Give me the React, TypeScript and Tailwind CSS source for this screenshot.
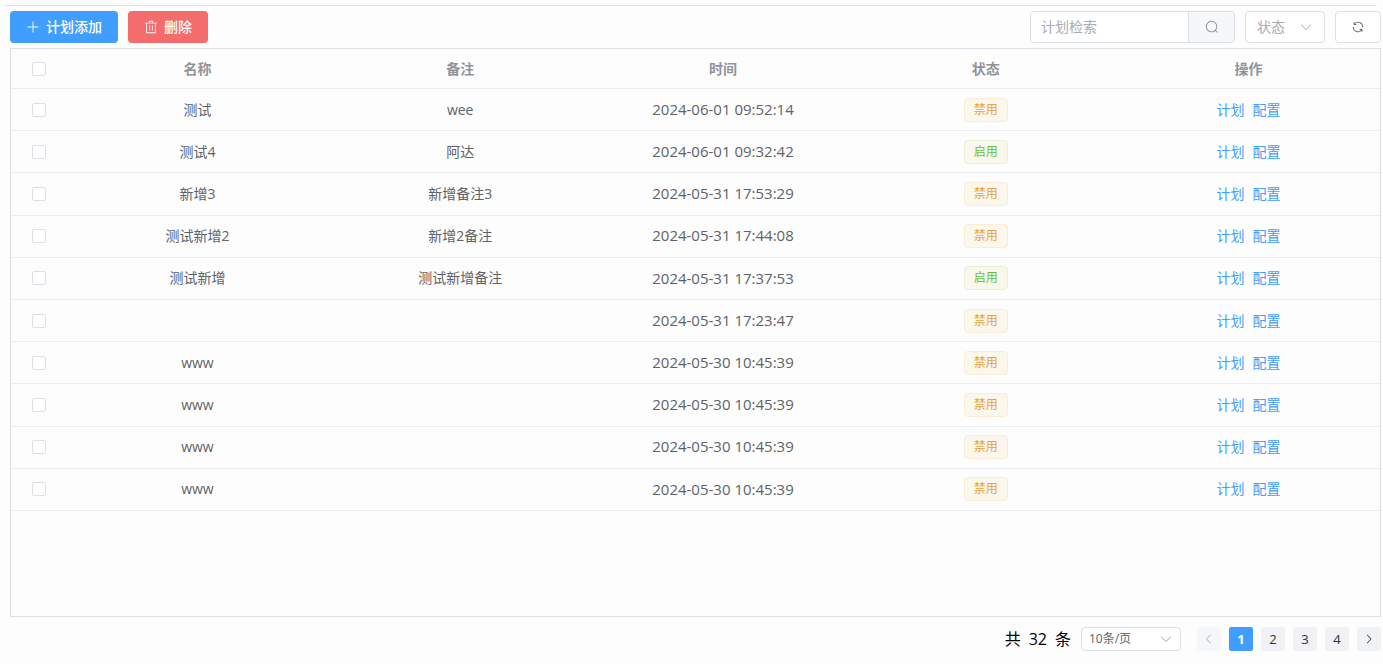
import React, { useState } from 'react';

interface Plan {
  id: number;
  name: string;
  remark: string;
  time: string;
  enabled: boolean;
}

const PLANS: Plan[] = [
  { id: 1, name: '测试', remark: 'wee', time: '2024-06-01 09:52:14', enabled: false },
  { id: 2, name: '测试4', remark: '阿达', time: '2024-06-01 09:32:42', enabled: true },
  { id: 3, name: '新增3', remark: '新增备注3', time: '2024-05-31 17:53:29', enabled: false },
  { id: 4, name: '测试新增2', remark: '新增2备注', time: '2024-05-31 17:44:08', enabled: false },
  { id: 5, name: '测试新增', remark: '测试新增备注', time: '2024-05-31 17:37:53', enabled: true },
  { id: 6, name: '', remark: '', time: '2024-05-31 17:23:47', enabled: false },
  { id: 7, name: 'www', remark: '', time: '2024-05-30 10:45:39', enabled: false },
  { id: 8, name: 'www', remark: '', time: '2024-05-30 10:45:39', enabled: false },
  { id: 9, name: 'www', remark: '', time: '2024-05-30 10:45:39', enabled: false },
  { id: 10, name: 'www', remark: '', time: '2024-05-30 10:45:39', enabled: false },
];

const PAGES = [1, 2, 3, 4];

const ICONS = {
  plus: 'M480 480V128a32 32 0 0 1 64 0v352h352a32 32 0 1 1 0 64H544v352a32 32 0 1 1-64 0V544H128a32 32 0 0 1 0-64z',
  trash:
    'M160 256H96a32 32 0 0 1 0-64h256V95.936a32 32 0 0 1 32-32h256a32 32 0 0 1 32 32V192h256a32 32 0 1 1 0 64h-64v672a32 32 0 0 1-32 32H192a32 32 0 0 1-32-32zm448-64v-64H416v64zM224 896h576V256H224zm192-128a32 32 0 0 1-32-32V416a32 32 0 0 1 64 0v320a32 32 0 0 1-32 32m192 0a32 32 0 0 1-32-32V416a32 32 0 0 1 64 0v320a32 32 0 0 1-32 32',
  search:
    'm795.904 750.72 124.992 124.928a32 32 0 0 1-45.248 45.248L750.656 795.904a416 416 0 1 1 45.248-45.248zM480 832a352 352 0 1 0 0-704 352 352 0 0 0 0 704',
  refresh:
    'M771.776 794.88A384 384 0 0 1 128 512h64a320 320 0 0 0 555.712 216.448H654.72a32 32 0 1 1 0-64h149.056a32 32 0 0 1 32 32v148.928a32 32 0 1 1-64 0v-50.56zM276.288 295.616h92.992a32 32 0 0 1 0 64H220.16a32 32 0 0 1-32-32V178.56a32 32 0 0 1 64 0v50.56A384 384 0 0 1 896.128 512h-64a320 320 0 0 0-555.776-216.384z',
  down: 'M831.872 340.864 512 652.672 192.128 340.864a30.592 30.592 0 0 0-42.752 0 29.12 29.12 0 0 0 0 41.6L489.664 714.24a32 32 0 0 0 44.672 0l340.288-331.712a29.12 29.12 0 0 0 0-41.728 30.592 30.592 0 0 0-42.752 0z',
  left: 'M609.408 149.376 277.76 489.6a32 32 0 0 0 0 44.672l331.648 340.352a29.12 29.12 0 0 0 41.728 0 30.592 30.592 0 0 0 0-42.752L339.264 511.936l311.872-319.872a30.592 30.592 0 0 0 0-42.688 29.12 29.12 0 0 0-41.728 0z',
  right:
    'M340.864 149.312a30.592 30.592 0 0 0 0 42.752L652.736 512 340.864 831.872a30.592 30.592 0 0 0 0 42.752 29.12 29.12 0 0 0 41.728 0L714.24 534.336a32 32 0 0 0 0-44.672L382.592 149.376a29.12 29.12 0 0 0-41.728 0z',
};

const Icon: React.FC<{ name: keyof typeof ICONS; className?: string }> = ({ name, className = 'size-3.5' }) => (
  <svg viewBox="0 0 1024 1024" fill="currentColor" aria-hidden="true" className={className}>
    <path d={ICONS[name]} />
  </svg>
);

const Checkbox: React.FC<{ label: string; checked: boolean; onChange: () => void }> = ({ label, checked, onChange }) => (
  <input
    type="checkbox"
    aria-label={label}
    checked={checked}
    onChange={onChange}
    className="block mx-auto size-3.5 appearance-none rounded-xs border border-[#dcdfe6] bg-white checked:border-[#409eff] checked:bg-[#409eff]"
  />
);

const StatusTag: React.FC<{ enabled: boolean }> = ({ enabled }) => (
  <span
    className={`inline-flex h-6 items-center rounded border bg-[#fbf7ea] px-[9px] text-xs ${
      enabled ? 'border-[#e1f3d8] text-[#67c23a]' : 'border-[#faecd8] text-[#e6a23c]'
    }`}
  >
    {enabled ? '启用' : '禁用'}
  </span>
);

const App: React.FC = () => {
  const [keyword, setKeyword] = useState('');
  const [status, setStatus] = useState('');
  const [page, setPage] = useState(1);
  const [selected, setSelected] = useState<number[]>([]);

  const allSelected = selected.length === PLANS.length;

  const toggle = (id: number) => {
    setSelected(prev => (prev.includes(id) ? prev.filter(x => x !== id) : [...prev, id]));
  };

  return (
    <div className="flex min-h-screen flex-col bg-[#fdfdfe] pt-[5px] font-['Open_Sans','Noto_Sans_CJK_SC',sans-serif] text-sm text-[#606266]">
      <hr className="ml-[5px] mr-[7px] border-t border-[#dcdfe6]" />

      <main className="flex flex-1 flex-col pt-[5px] pr-0.5 pb-[13px] pl-2.5">
        {/* Toolbar */}
        <div className="flex justify-between">
          <div className="flex gap-2.5">
            <button className="flex h-8 items-center gap-1.5 rounded bg-[#409eff] px-4 font-medium text-white">
              <Icon name="plus" />
              计划添加
            </button>
            <button className="flex h-8 items-center gap-1.5 rounded bg-[#f56c6c] px-4 font-medium text-white">
              <Icon name="trash" />
              删除
            </button>
          </div>

          <div className="flex gap-2.5">
            <div className="flex h-8 w-[205px] overflow-hidden rounded border border-[#dcdfe6]">
              <input
                type="text"
                aria-label="计划检索"
                placeholder="计划检索"
                value={keyword}
                onChange={e => setKeyword(e.target.value)}
                className="min-w-0 flex-1 bg-white px-2.5 outline-none placeholder:text-[#a8abb2]"
              />
              <button
                aria-label="搜索"
                className="flex w-[46px] items-center justify-center border-l border-[#dcdfe6] bg-[#f5f7fa] text-[#909399]"
              >
                <Icon name="search" />
              </button>
            </div>
            <div className="relative">
              <select
                aria-label="状态"
                value={status}
                onChange={e => setStatus(e.target.value)}
                className="h-8 w-20 appearance-none rounded border border-[#dcdfe6] bg-white pl-[11px] text-[#a8abb2] outline-none"
              >
                <option value="">状态</option>
                <option value="on">启用</option>
                <option value="off">禁用</option>
              </select>
              <Icon name="down" className="pointer-events-none absolute top-[9px] right-3 size-3.5 text-[#a8abb2]" />
            </div>
            <button
              aria-label="刷新"
              className="flex h-8 w-[46px] items-center justify-center rounded border border-[#dcdfe6] bg-white"
            >
              <Icon name="refresh" />
            </button>
          </div>
        </div>

        {/* Plan table */}
        <div className="mt-[5px] flex-1 border border-[#dcdfe6]">
          <table className="h-[462px] w-full table-fixed border-separate border-spacing-0 text-center [&_td]:border-b [&_td]:border-[#ebeef5] [&_th]:border-b [&_th]:border-[#ebeef5]">
            <thead className="text-[#909399]">
              <tr className="h-10">
                <th className="w-[55px]">
                  <Checkbox
                    label="全选"
                    checked={allSelected}
                    onChange={() => setSelected(allSelected ? [] : PLANS.map(p => p.id))}
                  />
                </th>
                <th>名称</th>
                <th>备注</th>
                <th>时间</th>
                <th>状态</th>
                <th>操作</th>
              </tr>
            </thead>
            <tbody>
              {PLANS.map(plan => (
                <tr key={plan.id}>
                  <td>
                    <Checkbox
                      label={`选择 ${plan.name}`}
                      checked={selected.includes(plan.id)}
                      onChange={() => toggle(plan.id)}
                    />
                  </td>
                  <td>{plan.name}</td>
                  <td>{plan.remark}</td>
                  <td className="text-[15px]">{plan.time}</td>
                  <td>
                    <div className="flex justify-center">
                      <StatusTag enabled={plan.enabled} />
                    </div>
                  </td>
                  <td>
                    <div className="flex justify-center gap-2 text-[#409eff]">
                      <a href="#plan">计划</a>
                      <a href="#config">配置</a>
                    </div>
                  </td>
                </tr>
              ))}
            </tbody>
          </table>
        </div>

        {/* Pagination */}
        <div className="mt-2.5 flex h-6 items-center justify-end text-[13px]">
          <p className="mr-2.5 flex gap-2 text-base text-black">
            <span>共</span>
            <span>32</span>
            <span>条</span>
          </p>
          <div className="relative mr-4">
            <select
              aria-label="每页条数"
              className="block h-6 w-[100px] appearance-none rounded border border-[#dcdfe6] bg-white pl-[7px] text-xs outline-none"
            >
              <option>10条/页</option>
              <option>20条/页</option>
              <option>50条/页</option>
            </select>
            <Icon name="down" className="pointer-events-none absolute top-[5px] right-2 size-3.5 text-[#a8abb2]" />
          </div>
          <nav className="flex gap-2 text-[#303133]">
            <button
              aria-label="上一页"
              disabled={page === 1}
              onClick={() => setPage(page - 1)}
              className="flex size-6 items-center justify-center rounded-xs bg-[#f0f2f5] disabled:bg-[#f5f7fa] disabled:text-[#a8abb2]"
            >
              <Icon name="left" className="size-3" />
            </button>
            {PAGES.map(n => (
              <button
                key={n}
                onClick={() => setPage(n)}
                className={`size-6 rounded-xs ${n === page ? 'bg-[#409eff] font-bold text-white' : 'bg-[#f0f2f5]'}`}
              >
                {n}
              </button>
            ))}
            <button
              aria-label="下一页"
              disabled={page === PAGES.length}
              onClick={() => setPage(page + 1)}
              className="flex size-6 items-center justify-center rounded-xs bg-[#f0f2f5] disabled:bg-[#f5f7fa] disabled:text-[#a8abb2]"
            >
              <Icon name="right" className="size-3" />
            </button>
          </nav>
        </div>
      </main>
    </div>
  );
};

export default App;
